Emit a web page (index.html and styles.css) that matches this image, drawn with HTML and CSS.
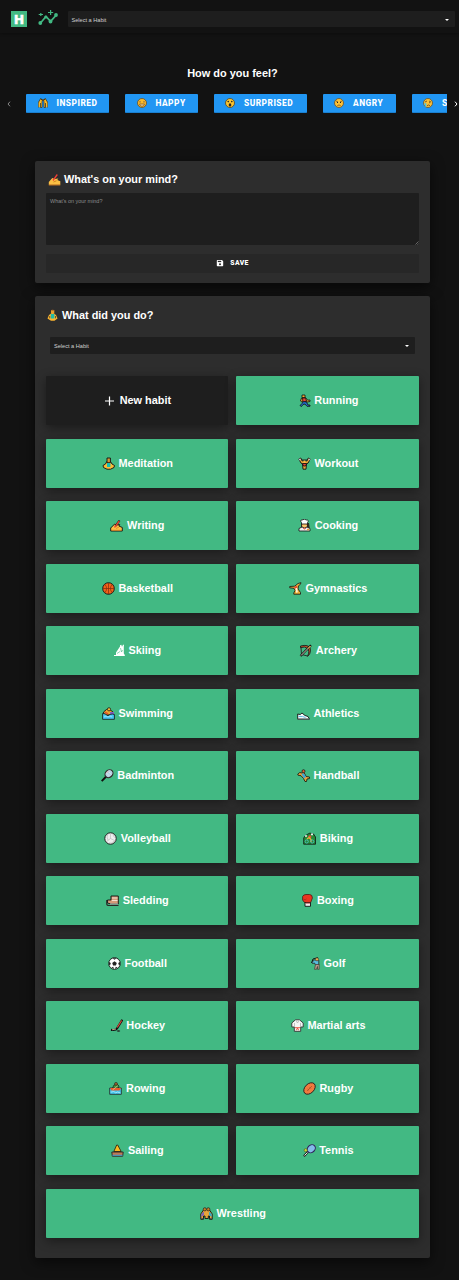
FILE: index.html
```html
<!DOCTYPE html>
<html lang="en">
<head>
<meta charset="utf-8">
<title>Habits</title>
<link rel="stylesheet" href="styles.css">
</head>
<body>
<header class="topbar">
  <div class="logo">H</div>
  <svg class="insights" viewBox="0 0 20 16"><g fill="none" stroke="#42b983" stroke-width="1.700"><path d="M2.300 13.200 8 6.500l4.600 4.900 5.700-6.400"/><path d="M.7 4.500h4.300M2.800 3v3M10 2.500h5.200M12.600.1v4.800" stroke-width="1.200"/></g><g fill="#42b983"><circle cx="2.300" cy="13" r="1.900"/><circle cx="7.800" cy="7" r="1.600"/><circle cx="12.500" cy="11.500" r="1.900"/><circle cx="18" cy="5" r="1.900"/></g></svg>
  <div class="select top-select"><span>Select a Habit</span><i class="caret"></i></div>
</header>

<section class="feel">
  <h2 class="feel-title">How do you feel?</h2>
  <div class="slider">
    <svg class="arrow dim" viewBox="0 0 4 6"><path d="M3 .7 1 3l2 2.300"/></svg>
    <div class="moods">
      <button class="mood w1"><svg viewBox="0 0 10 10"><path d="M.6 9.500V4L2.500.8 4.500 1.500 4 4v5.500H2.500V5M9.400 9.500V4L7.500.8 5.500 1.500 6 4v5.500h1.500V5" fill="#fcba28" stroke="#3a2b10" stroke-width=".7"/><path d="M1.300 4.500v4.700M8.700 4.500v4.700" stroke="#fcba28" stroke-width="1.200"/><path d="M2.500.7 4.700 2.500M7.500.7 5.300 2.500" stroke="#4b3513"/></svg><span>Inspired</span></button>
      <button class="mood w2"><svg viewBox="0 0 10 10"><circle cx="5" cy="5" r="4.500" fill="#fcba28" stroke="#624a2b" stroke-width=".8"/><path d="M2 4.300q1-1.600 2 0M6 4.300q1-1.600 2 0M2.500 6h5q-.5 2.300-2.500 2.300T2.500 6z" fill="#f5d79b" stroke="#744b1b" stroke-width=".7"/></svg><span>Happy</span></button>
      <button class="mood w3"><svg viewBox="0 0 10 10"><circle cx="5" cy="5" r="4.500" fill="#fcc52f" stroke="#4f4225" stroke-width=".8"/><circle cx="3.200" cy="3.600" r=".8" fill="#222"/><circle cx="6.800" cy="3.600" r=".8" fill="#222"/><ellipse cx="5" cy="6.900" rx="1.300" ry="1.600" fill="#222"/></svg><span>Surprised</span></button>
      <button class="mood w4"><svg viewBox="0 0 10 10"><circle cx="5" cy="5" r="4.500" fill="#fcc135" stroke="#67502d" stroke-width=".8"/><path d="m2 3 2 1M8 3 6 4M3.300 7.700q1.700-1.500 3.400 0" fill="none" stroke="#66421b" stroke-width=".7"/><path d="M3 4.500h1M6 4.500h1" stroke="#222"/></svg><span>Angry</span></button>
      <button class="mood w5"><svg viewBox="0 0 10 10"><circle cx="5" cy="5" r="4.500" fill="#fcc135" stroke="#67502d" stroke-width=".8"/><path d="m2 4 2-1M8 4 6 3M4 7.700q1.500-1.500 3 0M6 4.700h1.300" fill="none" stroke="#66421b" stroke-width=".8"/><path d="M1.300 5.200h2v3.300l-1.200.3z" fill="#3ec2f0"/></svg><span>Sad</span></button>
    </div>
    <svg class="arrow" viewBox="0 0 4 6"><path d="m1 .7 2 2.300-2 2.300"/></svg>
  </div>
</section>

<main class="content">
  <section class="card mind">
    <h2 class="title mind-title"><svg viewBox="0 0 13 13"><path d="M.8 11.800V9l3.500-4 2.500 1 3.500-.6-1 1.700 3 1.200v3.500z" fill="#fcc044"/><path d="M5 7.500 9.300 1.500" stroke="#ef3f35" stroke-width="1.300"/><path d="M.8 12h11.500" stroke="#e88620" stroke-width=".8"/><path d="m5.500 9 3-1.200" stroke="#c67818" stroke-width=".8"/></svg>What's on your mind?</h2>
    <div class="note-wrap">
      <textarea class="note" placeholder="What's on your mind?"></textarea>
      <svg class="grip" viewBox="0 0 4 4"><path d="M.5 3.500l3-3M2.500 3.700l1.200-1.200"/></svg>
    </div>
    <button class="save"><svg viewBox="0 0 8 8"><path d="M1.500 1H6l1.200 1.200v4.300a.7.7 0 0 1-.7.700h-5a.7.7 0 0 1-.7-.7V1.700q0-.7.700-.7z" fill="#fff"/><path d="M1.800 1.800h3.400v1.300H1.800z" fill="#272727"/><circle cx="4" cy="5.300" r="1" fill="#272727"/></svg><span>Save</span></button>
  </section>

  <section class="card did">
    <h2 class="title did-title"><svg viewBox="0 0 13 13"><path d="M6.500 3.500 3 6 1.500 9.500l3.500 2.300h3.500l3-2.300L10 6z" fill="#fbb52f"/><path d="M4.800 5h3.600v4.500H4.800z" fill="#20b9a7"/><path d="M5 1h3.300v3.500H5z" fill="#e8a02c"/><path d="M5 1.500q1.600-2 3.300 0z" fill="#784c26"/><path d="M3.700 7v2.300M9.500 7v2.300" stroke="#4c3a23" stroke-width=".8"/></svg>What did you do?</h2>
    <div class="select habit-select"><span>Select a Habit</span><i class="caret"></i></div>
    <div class="grid">
      <div class="tile new"><svg viewBox="0 0 13 13"><path d="M2 7h9M6.500 2.500v9" stroke="#fff" stroke-width="1.200"/></svg>New habit</div>
      <div class="tile"><svg viewBox="0 0 13 13"><g stroke="#111" stroke-width=".8"><path d="m3.500 4 4-.5 2.200 2.700L12 6v1.500L9 8 7 6.500 4 8 2.500 7z" fill="#f1a52c"/><path d="M4.500 4h3l1 3-3.500 1.500z" fill="#ed4137"/><path d="m5.500 7.500 3 .5 1.500 3h2v1.300H9L7 10l-2 .5-1.500 2L2 11.500l2-2z" fill="#246bcb"/><path d="M4 1h3v2.500H4z" fill="#fbb030"/></g></svg>Running</div>

      <div class="tile"><svg viewBox="0 0 13 13"><g stroke="#111" stroke-width=".9"><path d="M4.800 4.500 3.500 7 1 8.500l.5 2L5 12.200h3.500l3.500-1.700.5-2L10 7 8.500 4.500z" fill="#fbbd39"/><path d="M5 1h3.400v4.700H5z" fill="#d79735"/></g><path d="M5 6h3.400v4H5z" fill="#16bdb1"/><path d="m3 9.800 3.700 1 3.600-1" fill="none" stroke="#fbbd39" stroke-width="1"/></svg>Meditation</div>
      <div class="tile"><svg viewBox="0 0 13 13"><g stroke="#111" stroke-width=".9"><path d="m.8 2 2-1 1.500 3h4.500l1.500-3 2 1-2.200 4L8.500 7 8 12.200H5L4.500 7 3 6z" fill="#edaa39"/><path d="M4.300 6.500h4.500L7.500 9h-2z" fill="#e9423d"/></g><path d="M.9 2.500h1.800M10.500 2.500h1.800" stroke="#b5c5ce" stroke-width="1.700"/><path d="M3.500 3h6" stroke="#222"/><circle cx="6.500" cy="4.700" r="1.200" fill="#fcbd41"/></svg>Workout</div>

      <div class="tile"><svg viewBox="0 0 13 13"><path d="M.7 12V9l4-4 1.500 1 3.500-.5-.8 1.500 3.400 1.500V12z" fill="#fcc044" stroke="#111" stroke-width=".9"/><path d="M5.500 7 9.500 1.500" stroke="#111" stroke-width="2"/><path d="M4.500 8.500 9.300 2" stroke="#e94335" stroke-width="1.300"/><path d="m6 9.500 3-1.500M1.500 11.300h10" stroke="#e18224" stroke-width=".8"/></svg>Writing</div>
      <div class="tile"><svg viewBox="0 0 13 13"><path d="M3 4h8l.7 5H10v2H3z" fill="#332920"/><circle cx="6.500" cy="6.500" r="2.500" fill="#fbc46a"/><path d="M1 12V9.500L4 8l2.500 1L9 8l3 1.500V12z" fill="#eee" stroke="#111" stroke-width=".8"/><path d="M3.500 5V3.500Q1.500 1 4 1q2.500-1.600 4.500 0 3 0 1 2.500V5z" fill="#fff" stroke="#111" stroke-width=".8"/><path d="m5 9 1.500 1L8 9" fill="none" stroke="#e8493c"/><path d="M9 10.500h2.300" stroke="#e99b34" stroke-width="1.500"/></svg>Cooking</div>

      <div class="tile"><svg viewBox="0 0 13 13"><circle cx="6.500" cy="6.500" r="5.800" fill="#f4621a" stroke="#111" stroke-width=".9"/><path d="M6.500 1v11M1 6.500h11M3 2.500q3.200 4 0 8M10 2.500q-3.200 4 0 8" fill="none" stroke="#7d2d0d" stroke-width=".7"/></svg>Basketball</div>
      <div class="tile"><svg viewBox="0 0 13 13"><path d="m.7 4.500 5-.3L9 1.500l3-.8-.5 1.300L9.500 4 9 7l2.500 3.500v1.700H4.800V11L6 8.500 5 6.300.7 5.800z" fill="#efb236" stroke="#111" stroke-width=".8"/><path d="m5 4.700 3-.7.5 2L6 7z" fill="#e94335"/><path d="m7.300 6 .7 4.500" stroke="#fff4dd" stroke-width="1.700"/></svg>Gymnastics</div>

      <div class="tile ski"><svg viewBox="0 0 11 13"><path d="M0 11h2V8.500l4-6V1.200l1.300-.5.7 2 1-2h1L9.800 3v6.500l1 1.500v1H0z" fill="#fff"/><path d="m3 9.500 3-2M6.500 4l1 4 1-2" fill="none" stroke="#42b983" stroke-width=".6"/></svg>Skiing</div>
      <div class="tile"><svg viewBox="0 0 13 13"><path d="M1.500 2q8-2 9.800 2.500Q12 10 8.500 12.300 11 7 8.500 4.500T1.500 3.700z" fill="#be552c" stroke="#111" stroke-width=".8"/><path d="m2 3.500.5 7L8.500 12" fill="none" stroke="#222" stroke-width=".9"/><path d="m1.500 12 10.500-10.700" stroke="#111" stroke-width="2.200"/><path d="M2 11.500 11.500 2" stroke="#d8ccb8"/><path d="m9 4.500 2.500-2.500" stroke="#f2bf32"/></svg>Archery</div>

      <div class="tile"><svg viewBox="0 0 13 13"><path d="m1.500 5 3-2.500L7 2l4 3v3H2z" fill="#eda52f" stroke="#111" stroke-width=".9"/><circle cx="7" cy="2.300" r="1.600" fill="#f9bb38" stroke="#111" stroke-width=".7"/><path d="M8 5h4v2.500H8z" fill="#8561c2"/><path d="m3 5 3 2" stroke="#e64b32" stroke-width="1.500"/><path d="M.6 6.500q3 0 4 1.500t3.500-.5q2-1 4.300 0v4.800H.6z" fill="#45c9f4" stroke="#111" stroke-width=".8"/><path d="m2 10 2-1 2 1 2-1 2 1" fill="none" stroke="#c8f0ff" stroke-width=".6"/></svg>Swimming</div>
      <div class="tile"><svg viewBox="0 0 13 13"><path d="m.7 7 2.500.5L5 6l3 2.500 3 1 1.500 2.700H.7z" fill="#f4f7f8" stroke="#111" stroke-width=".9"/><path d="M1.500 9.500h4l3 1" fill="none" stroke="#65bfe9"/><path d="M.6 12h11.800" stroke="#626b70" stroke-width=".8"/></svg>Athletics</div>

      <div class="tile"><svg viewBox="0 0 13 13"><path d="m.7 12.200 4.500-4.700" stroke="#111" stroke-width="1.900"/><ellipse cx="8" cy="4.700" rx="4.300" ry="3.600" transform="rotate(-45 8 4.700)" fill="#b8d1e2" stroke="#302626" stroke-width="1.100"/><path d="m5.500 4 3 3M7.500 2.500l3 3" stroke="#e7edf4" stroke-width=".6"/><path d="M5.500 4 7.500 2" stroke="#e8b7b7"/></svg>Badminton</div>
      <div class="tile"><svg viewBox="0 0 13 13"><path d="m.8 5 2-1.500L5 4l2-.5 2.200 4L12.500 8v1.500L10 10l-.5 2.500H8L6.500 9.500 4 6.700l-3-.5z" fill="#e6a33a" stroke="#111" stroke-width=".8"/><path d="m4.500 5 2.200-.7 2.300 3.500-2 1.700z" fill="#3aa7d8"/><circle cx="6.500" cy="2.200" r="1.500" fill="#e96734" stroke="#111" stroke-width=".7"/></svg>Handball</div>

      <div class="tile"><svg viewBox="0 0 13 13"><circle cx="6.500" cy="6.500" r="5.700" fill="#eee" stroke="#111" stroke-width=".9"/><path d="M6.500 6.500V1M6.500 6.500 2 10M6.500 6.500 11.500 9M4 2q-2 3 0 6M9 2q0 3 2.500 4M5 11q3 1 5-2" fill="none" stroke="#aaa" stroke-width=".5"/></svg>Volleyball</div>
      <div class="tile"><svg viewBox="0 0 13 13"><path d="M.7 12.200V6L2 4 5 2l2-1 2 1h1.500l2 3v7.200z" fill="#258b35" stroke="#111" stroke-width=".8"/><path d="M2 4h2M8 2.300h2" stroke="#eee" stroke-width="1.700"/><path d="m5 4.500 2-1.500 1.500 2-1.500 1.500z" fill="#ef493c"/><path d="m4 7 2-1.500 2 2v2.500" fill="none" stroke="#efb13a" stroke-width="1.200"/><g fill="none" stroke="#51c7d4" stroke-width=".8"><circle cx="3.700" cy="9.500" r="1.600"/><circle cx="9.200" cy="9.500" r="1.600"/></g></svg>Biking</div>

      <div class="tile"><svg viewBox="0 0 13 13"><path d="M5 2h7.300v8H5L1.500 9V6H5z" fill="#d49a78" stroke="#111" stroke-width=".9"/><path d="M6 4h5.500M6 6.500h5.500" stroke="#f4dfd1" stroke-width="1.200"/><path d="M.8 6v4q0 1.500 2.200 1.500h9.500" fill="none" stroke="#292525" stroke-width="1.200"/><path d="M4 10h8" stroke="#ddd" stroke-width=".8"/></svg>Sledding</div>
      <div class="tile box"><svg viewBox="0 0 11 13"><path d="M2.500 8.500.6 6V2.500Q1.500.5 4 .5h3.500q2.900 0 2.900 3.500L8.700 8.500z" fill="#e93420" stroke="#4e1914" stroke-width=".8"/><path d="M3 8.500h5.500v3.800H3z" fill="#eee" stroke="#111" stroke-width=".9"/><path d="M1.500 5.200q2 1.200 3-.3" fill="none" stroke="#a5221a" stroke-width=".7"/><path d="M3.500 9h4.500" stroke="#a5221a"/></svg>Boxing</div>

      <div class="tile"><svg viewBox="0 0 13 13"><circle cx="6.500" cy="6.500" r="5.800" fill="#fff" stroke="#111" stroke-width=".9"/><path d="m6.500 4.200 2.300 1.700-.9 2.700H5.100l-.9-2.700zM4.500 1.200h4l-2 1.500zM1 5l1.800 1L2 8.500l-1-1zM12 5l-1.800 1 .8 2.500 1-1zM3.500 10.500l1.700-.8.800 2.300zM9.500 10.500l-1.700-.8L7 12z" fill="#222"/></svg>Football</div>
      <div class="tile golf"><svg viewBox="0 0 9 13"><path d="m.5 6 1.500-4 5-1.300" fill="none" stroke="#111"/><path d="M3.500 3h4.300v5H4.500L3.500 6 1.500 6.500 1 5z" fill="#58bddd" stroke="#222" stroke-width=".8"/><path d="M4.500 7.500h3.700v4.800H6.500V9.500L5.500 12.300H3.500z" fill="#b99a88" stroke="#413b37" stroke-width=".7"/><circle cx="6" cy="2.300" r="1.600" fill="#ecad4a" stroke="#333" stroke-width=".6"/></svg>Golf</div>

      <div class="tile"><svg viewBox="0 0 13 13"><path d="M12.300.7 7 9.500q-1 2-6 1.300" fill="none" stroke="#111" stroke-width="2.200"/><path d="m11.700 1.500-4.500 7" stroke="#df4938" stroke-width="1.200"/><path d="m2 10.800 4-.8" stroke="#b89b83" stroke-width="1"/><ellipse cx="8.500" cy="12" rx="1.700" ry=".8" fill="#252525"/></svg>Hockey</div>
      <div class="tile"><svg viewBox="0 0 13 13"><path d="M4.500.8h4L12.200 4v4H9.700v4.300H3.300V8H.8V4z" fill="#f6f6f6" stroke="#333" stroke-width=".9"/><path d="M5 1.500 6.500 4 8 1.500M3.500 4v4M9.500 4v4" fill="none" stroke="#aaa" stroke-width=".7"/><path d="M3.800 8.700h5.400M5.300 11.300l1.200-2.300 1.200 2.300" fill="none" stroke="#e74432" stroke-width=".9"/></svg>Martial arts</div>

      <div class="tile"><svg viewBox="0 0 13 13"><path d="m3.500 6 1.500-3 3-1 2 2-.5 2" fill="#499b38" stroke="#222" stroke-width=".8"/><circle cx="7" cy="1.900" r="1.500" fill="#9d632a" stroke="#222" stroke-width=".6"/><path d="M.7 6h11.600v6.300H.7z" fill="#43c7ef" stroke="#222" stroke-width=".8"/><path d="M1 6h11l-1.500 2.500h-8z" fill="#e8592c"/><path d="M1.500 10h2l1-1 2 2 2-1 3 1" fill="none" stroke="#c9f3ff" stroke-width=".7"/><path d="m3.500 8 5-4" stroke="#ead5a8" stroke-width=".7"/></svg>Rowing</div>
      <div class="tile"><svg viewBox="0 0 13 13"><ellipse cx="6.500" cy="6.500" rx="6.700" ry="4.600" transform="rotate(-45 6.500 6.500)" fill="#f27a3e" stroke="#28211e" stroke-width=".9"/><path d="m4 9 5-5M4.700 7l1.300 1.300M6.500 5.200l1.300 1.300" stroke="#a14c27" stroke-width=".7"/></svg>Rugby</div>

      <div class="tile"><svg viewBox="0 0 13 13"><path d="M5.700 1h1l3.500 6.500H2.800z" fill="#fbba20" stroke="#332811" stroke-width=".9"/><path d="M.8 8h11.400l-.5 4.200H1.300z" fill="#bd7954" stroke="#222" stroke-width=".9"/><path d="M1.500 11.300h10" stroke="#369cd2"/></svg>Sailing</div>
      <div class="tile"><svg viewBox="0 0 13 13"><path d="m.9 12.200 4.300-4.700" stroke="#222" stroke-width="2"/><path d="m1.500 11.500 3-3" stroke="#fff" stroke-width=".9"/><ellipse cx="8.300" cy="4.700" rx="4.400" ry="3.600" transform="rotate(-45 8.300 4.700)" fill="#83bce9" stroke="#2f235c" stroke-width="1.100"/><circle cx="2.700" cy="6.200" r="1.600" fill="#cadb36" stroke="#435323" stroke-width=".6"/></svg>Tennis</div>

      <div class="tile wide"><svg viewBox="0 0 13 13"><path d="M.8 12.300V7l3-4.500h5.400l3 4.500v5.300H9.500V9H8.300v2.500H5V9H3.500v3.300z" fill="#e7a43a" stroke="#111" stroke-width=".9"/><path d="M1.300 10V7L4 4.500V8z" fill="#8061b2"/><path d="m9 4.500 2.700 2.500v3L9 8z" fill="#36a9c5"/><path d="M1.300 11.500h2M9.800 11.500h2" stroke="#555"/><circle cx="4.800" cy="2.300" r="1.600" fill="#c98226" stroke="#222" stroke-width=".7"/><circle cx="8.300" cy="2.300" r="1.600" fill="#c98226" stroke="#222" stroke-width=".7"/></svg>Wrestling</div>
    </div>
  </section>
</main>
</body>
</html>
```
FILE: styles.css
```css
* { box-sizing: border-box; }
body {
  margin: 0;
  width: 459px;
  height: 1280px;
  overflow: hidden;
  background: #121212;
  color: #fff;
  font-family: "Liberation Sans", Arial, sans-serif;
}
h2 { margin: 0; }
button { border: 0; color: #fff; font-family: Roboto, sans-serif; text-transform: uppercase; }
svg { display: block; flex: none; }

.topbar {
  height: 33px;
  padding: 11px 4px 0 11px;
  display: flex;
  align-items: flex-start;
  box-shadow: 0 1px 3px rgba(0, 0, 0, .3);
}
.logo {
  width: 16px;
  height: 16px;
  background: #42b983;
  font: 900 13.500px/17px Roboto, sans-serif;
  text-align: center;
  -webkit-text-stroke: .5px #fff;
}
.insights { width: 20px; height: 16px; margin: -1px 9.500px 0 11px; }
.select {
  display: flex;
  align-items: center;
  justify-content: space-between;
  background: #1e1e1e;
  color: #d0d0d0;
  font: 5.600px/8px "Liberation Sans", Arial, sans-serif;
  border-radius: 1px;
}
.caret {
  border: 2px solid transparent;
  border-top-color: #fff;
  border-bottom: 0;
}
.top-select { flex: 1; height: 16px; padding: 1px 6px 0 4px; }

.feel { height: 127.500px; padding-top: 34px; }
.feel-title { padding-left: 6px; font-size: 10.950px; line-height: 13px; text-align: center; }
.slider { display: flex; align-items: center; margin-top: 14px; height: 19px; padding-left: 7px; }
.arrow { width: 4px; height: 6px; fill: none; stroke: #fff; stroke-width: 1; }
.arrow.dim { stroke: #888; }
.moods { display: flex; gap: 16px; width: 421px; margin: 0 7px 0 15px; overflow: hidden; }
.mood {
  flex: none;
  display: flex;
  align-items: center;
  height: 18.500px;
  padding: 0 0 1px 11.500px;
  gap: 9px;
  background: #2196f3;
  border-radius: 1px;
  box-shadow: inset 0 -.5px 0 #176bad;
  font-size: 8.400px;
  font-weight: 800;
  letter-spacing: .48px;
}
.mood svg { width: 10px; height: 10px; }
.w1 { width: 83px; }
.w2 { width: 72.500px; }
.w3 { width: 93px; }
.w4 { width: 73px; }
.w5 { width: 61px; }

.content { padding: 0 29px 0 35px; }
.card {
  background: #2d2d2d;
  border-radius: 2px;
  padding: 0 11px;
  box-shadow: 0 4px 14px rgba(0, 0, 0, .6);
}
.title { display: flex; align-items: center; font-size: 10.900px; line-height: 13px; }
.title svg { width: 13px; height: 13px; }
.mind { height: 122.500px; padding-top: 12px; }
.mind-title { padding-left: 1.500px; gap: 3.500px; }
.note-wrap { position: relative; width: 373px; margin-top: 7.500px; }
.note {
  display: block;
  width: 100%;
  height: 51.500px;
  padding: 3.800px 4px;
  border: 0;
  border-radius: 1px;
  resize: none;
  background: #1e1e1e;
  color: #fff;
  font: 5.450px/8px "Liberation Sans", Arial, sans-serif;
}
.note::placeholder { color: #8c8c8c; opacity: 1; }
.grip { position: absolute; right: 0; bottom: 0; width: 4px; height: 4px; fill: none; stroke: #999; stroke-width: .6; }
.save {
  width: 373px;
  height: 19px;
  margin-top: 9.500px;
  padding: 0 0 1px;
  display: flex;
  align-items: center;
  justify-content: center;
  gap: 6px;
  background: #272727;
  border-radius: 1px;
  font-size: 6.800px;
  font-weight: 900;
  letter-spacing: .35px;
}
.save svg { width: 8px; height: 8px; }

.did { margin-top: 13px; height: 962px; padding-top: 13px; }
.did-title { gap: 3px; }
.habit-select { height: 17px; margin: 15px 4px 0; padding: 0 6px 0 4px; }
.grid {
  display: grid;
  grid-template-columns: 182px 182.600px;
  grid-auto-rows: 49px;
  gap: 13.540px 8.400px;
  margin-top: 22px;
}
.tile {
  display: flex;
  align-items: center;
  justify-content: center;
  gap: 3.700px;
  padding-left: .8px;
  background: #42b983;
  border-radius: 1px;
  box-shadow: 0 3px 11px rgba(0, 0, 0, .42);
  font-size: 10.900px;
  font-weight: 700;
  line-height: 13px;
}
.tile svg { width: 13px; height: 13px; }
.tile.new { background: #1e1e1e; padding-left: 0; }
.tile.ski svg, .tile.box svg { width: 11px; }
.tile.golf svg { width: 9px; }
.tile.wide { grid-column: 1 / -1; }
```
